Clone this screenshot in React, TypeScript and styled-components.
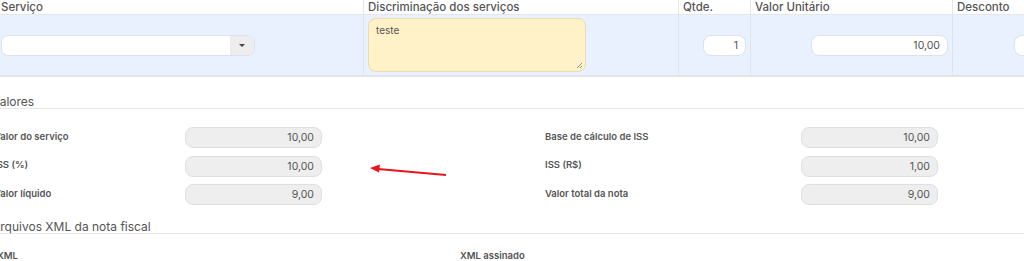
import React from "react";
import styled, { createGlobalStyle } from "styled-components";

const Global = createGlobalStyle`
  html, body { margin: 0; padding: 0; background: #ffffff; }
  body { font-family: Inter, "Noto Sans", Arial, sans-serif; color: #555; overflow: hidden; }
  * { box-sizing: border-box; }
`;

const Page = styled.div`
  position: relative;
  width: 1060px;
  margin-left: -6px;
  height: 261px;
  overflow: hidden;
`;

const Table = styled.div`
  display: grid;
  grid-template-columns: 366px 315px 72px 202px 200px;
  margin-left: 3px;
`;

const HeadCell = styled.div<{ $first?: boolean }>`
  height: 15px;
  padding: 0 4px;
  font-size: 11.5px;
  font-weight: 500;
  color: #555;
  line-height: 14px;
  border-bottom: 1px solid #e4e6ea;
  border-left: ${(p) => (p.$first ? "none" : "1px solid #e4e6ea")};
  white-space: nowrap;
`;

const BodyCell = styled.div<{ $first?: boolean; $align?: string; $padLeft?: number }>`
  height: 62px;
  background: #e8f1fd;
  border-bottom: 2px solid #e2e4e8;
  border-left: ${(p) => (p.$first ? "none" : "1px solid #dfe4ea")};
  display: flex;
  align-items: center;
  justify-content: ${(p) => p.$align || "flex-start"};
  padding: 0 4px 0 ${(p) => (p.$padLeft ?? 4)}px;
`;

const Select = styled.div`
  display: flex;
  width: 254px;
  height: 21px;
  background: #fff;
  border: 1px solid #dde3ea;
  border-radius: 7px;
  overflow: hidden;
`;

const SelectField = styled.div`
  flex: 1;
`;

const SelectButton = styled.div`
  width: 24px;
  background: #ededed;
  display: flex;
  align-items: center;
  justify-content: center;
`;

const Caret = styled.span`
  width: 0;
  height: 0;
  border-left: 3.5px solid transparent;
  border-right: 3.5px solid transparent;
  border-top: 3.5px solid #444;
`;

const TextArea = styled.div`
  position: relative;
  width: 218px;
  height: 54px;
  margin-top: -1px;
  background: #fff2c9;
  border: 1px solid #eadcae;
  border-radius: 8px;
  padding: 5px 7px;
  font-size: 10px;
  color: #555;
  align-self: center;
`;

const Grip = styled.svg`
  position: absolute;
  right: 2px;
  bottom: 2px;
`;

const Input = styled.div<{ $w: number; $ro?: boolean }>`
  width: ${(p) => p.$w}px;
  height: 21px;
  background: ${(p) => (p.$ro ? "#eeeeee" : "#ffffff")};
  border: 1px solid ${(p) => (p.$ro ? "#dddfe3" : "#dde3ea")};
  border-radius: 8px;
  font-size: 10.5px;
  color: #555;
  display: flex;
  align-items: center;
  justify-content: flex-end;
  padding: 0 7px;
`;

const Section = styled.div<{ $top: number }>`
  margin-top: ${(p) => p.$top}px;
`;

const SectionTitle = styled.div`
  font-size: 12px;
  color: #555;
  line-height: 13px;
  border-bottom: 1px solid #e8e8e8;
  margin-right: 30px;
  text-indent: -2px;
`;

const FieldsGrid = styled.div`
  display: grid;
  grid-template-columns: 191px 137px 223px 256px 137px;
  row-gap: 7.5px;
  padding-top: 18px;
  align-items: center;
`;

const Label = styled.div`
  font-size: 9.5px;
  font-weight: 600;
  color: #555;
  margin-top: -3px;
  white-space: nowrap;
`;

const Spacer = styled.div``;

const XmlRow = styled.div`
  display: grid;
  grid-template-columns: 463px 1fr;
  padding-top: 16px;
`;

const XmlLabel = styled.div`
  font-size: 9.5px;
  font-weight: 600;
  color: #555;
  margin-left: 3px;
`;

const Arrow = styled.svg`
  position: absolute;
  left: 370px;
  top: 160px;
`;

const rows = [
  ["Valor do serviço", "10,00", "Base de cálculo de ISS", "10,00"],
  ["ISS (%)", "10,00", "ISS (R$)", "1,00"],
  ["Valor líquido", "9,00", "Valor total da nota", "9,00"],
];

export default function App() {
  return (
    <>
      <Global />
      <Page>
        <Table>
          <HeadCell $first>Serviço</HeadCell>
          <HeadCell>Discriminação dos serviços</HeadCell>
          <HeadCell>Qtde.</HeadCell>
          <HeadCell>Valor Unitário</HeadCell>
          <HeadCell>Desconto</HeadCell>
          <BodyCell $first>
            <Select>
              <SelectField />
              <SelectButton>
                <Caret />
              </SelectButton>
            </Select>
          </BodyCell>
          <BodyCell>
            <TextArea>
              teste
              <Grip width="7" height="7" viewBox="0 0 7 7">
                <path d="M6 1L1 6M6 4L4 6" stroke="#777" strokeWidth="0.8" />
              </Grip>
            </TextArea>
          </BodyCell>
          <BodyCell $align="flex-end">
            <Input $w={43}>1</Input>
          </BodyCell>
          <BodyCell $align="flex-end">
            <Input $w={137}>10,00</Input>
          </BodyCell>
          <BodyCell $padLeft={61}>
            <Input $w={137}>0,00</Input>
          </BodyCell>
        </Table>

        <Section $top={18}>
          <SectionTitle>Valores</SectionTitle>
          <FieldsGrid>
            {rows.map((r) => (
              <React.Fragment key={r[0]}>
                <Label>{r[0]}</Label>
                <Input $w={137} $ro>
                  {r[1]}
                </Input>
                <Spacer />
                <Label>{r[2]}</Label>
                <Input $w={137} $ro>
                  {r[3]}
                </Input>
              </React.Fragment>
            ))}
          </FieldsGrid>
        </Section>

        <Section $top={15}>
          <SectionTitle>Arquivos XML da nota fiscal</SectionTitle>
          <XmlRow>
            <XmlLabel>XML</XmlLabel>
            <XmlLabel>XML assinado</XmlLabel>
          </XmlRow>
        </Section>

        <Arrow width="90" height="24" viewBox="0 0 90 24">
          <line x1="82" y1="15" x2="14" y2="9" stroke="#e8141b" strokeWidth="2" />
          <polygon points="6,8 16,4.5 15,12.5" fill="#e8141b" />
        </Arrow>
      </Page>
    </>
  );
}
